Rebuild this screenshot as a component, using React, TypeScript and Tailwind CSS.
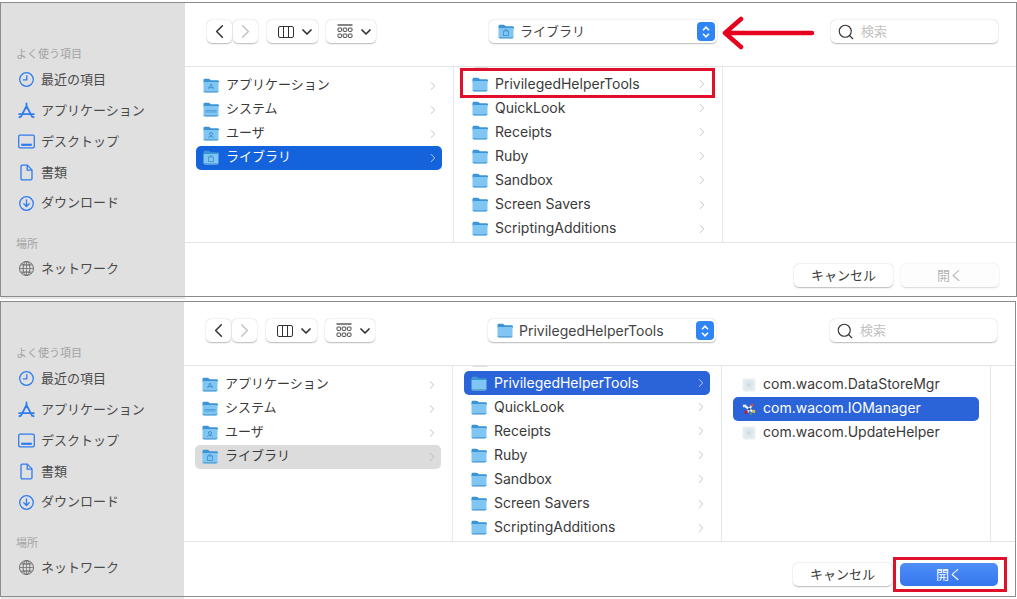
import type { ReactNode } from "react";
import { ChevronLeft, ChevronRight, ChevronDown, Search } from "lucide-react";

type Glyph = "apps" | "system" | "user" | "library" | "none";

function Folder({ glyph = "none", className = "w-4 h-[15px]" }: { glyph?: Glyph; className?: string }) {
  return (
    <svg viewBox="0 0 16 15" className={`${className} shrink-0`}>
      <path d="M0.5 2.2C0.5 1.3 1.1 .8 2 .8h3.6c.6 0 1 .2 1.4.6l.9.9h6.6c.9 0 1.5.6 1.5 1.5v1H.5z" fill="#3d94d4" />
      <path d="M.5 4h15v8.8c0 1-.6 1.6-1.5 1.6H2c-.9 0-1.5-.6-1.5-1.6z" fill="#7fc6f4" />
      <path d="M.5 13h15v.1c0 .8-.6 1.4-1.5 1.4H2c-.9 0-1.5-.6-1.5-1.4z" fill="#5ea6d6" />
      {glyph === "apps" && <path d="M8 6l-2.4 5M8 6l2.4 5M5.5 9.6h5" stroke="#3f8fca" strokeWidth=".9" fill="none" />}
      {glyph === "system" && <path d="M2.5 8.6h11M2.5 10h11" stroke="#3f8fca" strokeWidth=".7" fill="none" />}
      {glyph === "user" && (
        <g fill="none" stroke="#3f8fca" strokeWidth=".9">
          <circle cx="8" cy="8" r="1.5" />
          <path d="M5.2 11.6c.6-1.4 5-1.4 5.6 0" />
        </g>
      )}
      {glyph === "library" && (
        <g fill="none" stroke="#3f8fca" strokeWidth=".8">
          <rect x="5.6" y="7" width="4.8" height="4.6" />
          <path d="M6.8 7V5.8h2.4V7" />
        </g>
      )}
    </svg>
  );
}

function DocIcon() {
  return (
    <svg viewBox="0 0 14 14" className="w-[14px] h-[14px] shrink-0">
      <rect x=".5" y=".5" width="13" height="13" rx="2" fill="#e8eff2" />
      <rect x="2.5" y="2.5" width="9" height="9" fill="#dde7ec" />
      <circle cx="7" cy="7" r="1.8" fill="#cfdce3" />
    </svg>
  );
}

function WacomIcon() {
  return (
    <svg viewBox="0 0 16 16" className="w-[14px] h-[14px] shrink-0">
      <path d="M4 5l8 6M11 4l-5 8" stroke="#f4f4f4" strokeWidth="2.4" />
      <rect x="1" y="3" width="4" height="3" fill="#dfe6ea" />
      <rect x="10" y="2" width="3" height="3" fill="#d8463f" />
      <rect x="3" y="10" width="3.5" height="3.5" fill="#b2233f" />
      <rect x="12" y="9" width="3" height="3.5" fill="#d5c23a" />
      <rect x="7" y="7" width="2.5" height="2.5" fill="#2b3f73" />
      <rect x="9" y="12" width="2.5" height="2.5" fill="#5a9a5a" />
    </svg>
  );
}

const sideIconClass = "w-[17px] h-[17px] text-[#2f7bf0] shrink-0";

function ClockIcon() {
  return (
    <svg viewBox="0 0 17 17" className={sideIconClass} fill="none" stroke="currentColor" strokeWidth="1.3">
      <circle cx="8.5" cy="8.5" r="6.8" />
      <path d="M8.8 4.6v4.3H5.4" strokeLinecap="round" />
    </svg>
  );
}

function AppIcon() {
  return (
    <svg viewBox="0 0 17 17" className={sideIconClass} fill="none" stroke="currentColor" strokeWidth="1.8" strokeLinecap="round">
      <path d="M8.5 1.5v2.6M8.5 4L3 14.6M8.5 4l5.5 10.6M1.2 12.2h14.6M1.4 15.2l1.6-.6M15.6 15.2l-1.6-.6" />
    </svg>
  );
}

function DesktopIcon() {
  return (
    <svg viewBox="0 0 17 17" className={sideIconClass} fill="none" stroke="currentColor" strokeWidth="1.3">
      <rect x=".7" y="2.2" width="15.6" height="12.6" rx="1.4" />
      <path d="M3.2 11.8h10.6" strokeWidth="2.2" />
    </svg>
  );
}

function DocumentIcon() {
  return (
    <svg viewBox="0 0 17 17" className={sideIconClass} fill="none" stroke="currentColor" strokeWidth="1.3">
      <path d="M3 2.4c0-.8.5-1.3 1.3-1.3h5l4.7 4.8v8.7c0 .8-.5 1.3-1.3 1.3H4.3c-.8 0-1.3-.5-1.3-1.3z" />
      <path d="M9.2 1.2v4.9H14" />
    </svg>
  );
}

function DownloadIcon() {
  return (
    <svg viewBox="0 0 17 17" className={sideIconClass} fill="none" stroke="currentColor" strokeWidth="1.3" strokeLinecap="round">
      <circle cx="8.5" cy="8.5" r="6.8" />
      <path d="M8.5 4.8v6.6M5.8 8.8l2.7 2.7 2.7-2.7" />
    </svg>
  );
}

function GlobeIcon() {
  return (
    <svg viewBox="0 0 17 17" className="w-[17px] h-[17px] text-[#6e6e6e] shrink-0" fill="none" stroke="currentColor" strokeWidth="1">
      <circle cx="8.5" cy="8.5" r="7" />
      <ellipse cx="8.5" cy="8.5" rx="3.4" ry="7" />
      <path d="M1.5 8.5h14M2.5 5h12M2.5 12h12M8.5 1.5v14M3.5 3.5c2 2 8 2 10 0M3.5 13.5c2-2 8-2 10 0" strokeWidth=".8" />
    </svg>
  );
}

function ColumnsIcon() {
  return (
    <svg viewBox="0 0 16 12" className="w-4 h-3 shrink-0" fill="none" stroke="#333" strokeWidth="1">
      <rect x=".5" y=".5" width="15" height="11" rx="1.5" />
      <path d="M5.5 .5v11M10.5 .5v11" />
    </svg>
  );
}

function GalleryIcon() {
  return (
    <svg viewBox="0 0 16 15" className="w-4 h-[15px] shrink-0" fill="none" stroke="#333" strokeWidth=".9">
      <path d="M.5 1h15" strokeWidth="1.2" />
      <rect x="1" y="4" width="3.6" height="3.4" rx=".8" />
      <rect x="6.2" y="4" width="3.6" height="3.4" rx=".8" />
      <rect x="11.4" y="4" width="3.6" height="3.4" rx=".8" />
      <rect x="1" y="10" width="3.6" height="3.4" rx=".8" />
      <rect x="6.2" y="10" width="3.6" height="3.4" rx=".8" />
      <rect x="11.4" y="10" width="3.6" height="3.4" rx=".8" />
    </svg>
  );
}

const btnClass = "h-[23px] bg-white rounded-[5px] shadow-[0_0.5px_1.5px_rgba(0,0,0,0.28)] flex items-center justify-center";

function SideHeading({ children, className }: { children: ReactNode; className: string }) {
  return <div className={`h-4 leading-4 pl-[15px] text-[11px] text-[#a3a3a3] ${className}`}>{children}</div>;
}

function SideItem({ icon, label }: { icon: ReactNode; label: string }) {
  return (
    <div className="h-[30.8px] flex items-center gap-[6px] pl-[17px] text-[13px] text-[#4a4a4a]">
      {icon}
      <span>{label}</span>
    </div>
  );
}

function Sidebar({ width }: { width: string }) {
  return (
    <div className={`${width} shrink-0 bg-[#e0e0e0] pt-[43px] relative`}>
      <SideHeading className="mb-[2.5px]">よく使う項目</SideHeading>
      <SideItem icon={<ClockIcon />} label="最近の項目" />
      <SideItem icon={<AppIcon />} label="アプリケーション" />
      <SideItem icon={<DesktopIcon />} label="デスクトップ" />
      <SideItem icon={<DocumentIcon />} label="書類" />
      <SideItem icon={<DownloadIcon />} label="ダウンロード" />
      <SideHeading className="mt-[18px] mb-[1px]">場所</SideHeading>
      <SideItem icon={<GlobeIcon />} label="ネットワーク" />
      <div className="absolute left-0 right-0 -bottom-[3px] h-[2px] bg-[#e6e6e6]" />
    </div>
  );
}

function Toolbar({ title, titleFolder, titleSize }: { title: string; titleFolder: Glyph; titleSize: string }) {
  return (
    <div className="h-[64px] border-b border-[#e4e4e4] pt-[17px] pl-[22px] flex items-start">
      <div className={`${btnClass} w-[25px]`}>
        <ChevronLeft className="w-[23px] h-[23px] text-[#333] shrink-0" strokeWidth={1.6} />
      </div>
      <div className={`${btnClass} w-[25px] ml-px`}>
        <ChevronRight className="w-[23px] h-[23px] text-[#c4c4c4] shrink-0" strokeWidth={1.6} />
      </div>
      <div className={`${btnClass} w-[51px] ml-[9px] pl-[11px] gap-[5px] !justify-start`}>
        <ColumnsIcon />
        <ChevronDown className="w-4 h-4 text-[#333] shrink-0" strokeWidth={2.6} />
      </div>
      <div className={`${btnClass} w-[50px] ml-[8px] pl-[11px] gap-[5px] !justify-start`}>
        <GalleryIcon />
        <ChevronDown className="w-4 h-4 text-[#333] shrink-0" strokeWidth={2.6} />
      </div>
      <div className={`${btnClass} w-[228px] ml-[113px] pl-[9px] pr-[2px] !justify-start`}>
        <Folder glyph={titleFolder} />
        <span className={`ml-[6px] text-[#444] ${titleSize}`}>{title}</span>
        <div className="ml-auto w-[18px] h-[19px] rounded-[4px] bg-[#2f84f6] flex flex-col items-center justify-center text-white">
          <svg viewBox="0 0 10 14" className="w-[10px] h-[14px]" fill="none" stroke="currentColor" strokeWidth="1.6">
            <path d="M2 5.2L5 2.2l3 3M2 8.8l3 3 3-3" />
          </svg>
        </div>
      </div>
      <div className={`${btnClass} w-[167px] ml-[114px] pl-[6px] !justify-start`}>
        <Search className="w-[18px] h-[18px] text-[#333] shrink-0" strokeWidth={1.5} />
        <span className="ml-[6px] text-[13px] text-[#c2c2c2]">検索</span>
      </div>
    </div>
  );
}

function Chevron({ white }: { white?: boolean }) {
  return (
    <ChevronRight
      className={`w-[14px] h-[14px] ml-auto shrink-0 ${white ? "text-[#dce6fa]" : "text-[#b4b4b4]"}`}
      strokeWidth={1.4}
    />
  );
}

type Row = { label: string; glyph?: Glyph; sel?: string; dark?: boolean; icon?: ReactNode; size?: string };

function Column({ rows, pad, chevron = true, peek, inset = "pl-[7px]" }: { rows: Row[]; pad: string; chevron?: boolean; peek?: boolean; inset?: string }) {
  return (
    <div className={`w-[269px] shrink-0 border-r border-[#e8e8e8] overflow-hidden px-[11px] relative ${pad}`}>
      {peek && <div className="absolute left-[19px] -top-[14px] w-4 h-[15px] rounded-[2px] bg-[#dddddd]" />}
      {rows.map((r) => (
        <div key={r.label} className={`h-[24.1px] rounded-[5px] flex items-center gap-[7px] pr-[2px] ${inset} ${r.size ?? "text-[14px]"} ${r.sel ?? ""} ${r.sel && r.dark ? "text-white" : "text-[#3a3a3a]"}`}>
          {r.icon ?? <Folder glyph={r.glyph} />}
          <span className="whitespace-nowrap mb-[2px]">{r.label}</span>
          {chevron && <Chevron white={!!r.sel && r.dark} />}
        </div>
      ))}
    </div>
  );
}

function Footer({ active }: { active?: boolean }) {
  return (
    <div className="flex-1 border-t border-[#e4e4e4] pt-[21px] pr-[17px] flex justify-end items-start gap-[8px]">
      <div className={`${btnClass} w-[99px] text-[13px] text-[#3a3a3a]`}>キャンセル</div>
      {active ? (
        <div className="h-[23px] w-[98px] rounded-[5px] bg-gradient-to-b from-[#4f8ff7] to-[#3575ee] flex items-center justify-center text-[13px] text-white">開く</div>
      ) : (
        <div className="h-[23px] w-[98px] rounded-[5px] bg-[#fdfdfd] shadow-[0_0.5px_1.5px_rgba(0,0,0,0.16)] flex items-center justify-center text-[13px] text-[#b4b4b4]">開く</div>
      )}
    </div>
  );
}

const tail: Row[] = [
  { label: "QuickLook" },
  { label: "Receipts" },
  { label: "Ruby" },
  { label: "Sandbox" },
  { label: "Screen Savers" },
  { label: "ScriptingAdditions" },
];

function rootRows(sel: string, dark: boolean): Row[] {
  return [
    { label: "アプリケーション", glyph: "apps", size: "text-[13px]" },
    { label: "システム", glyph: "system", size: "text-[13px]" },
    { label: "ユーザ", glyph: "user", size: "text-[13px]" },
    { label: "ライブラリ", glyph: "library", size: "text-[13px]", sel, dark },
  ];
}

function Shell({ className, sidebar, children }: { className: string; sidebar: string; children: ReactNode }) {
  return (
    <div className={`border border-[#8c8c8c] flex bg-white ${className}`}>
      <Sidebar width={sidebar} />
      <div className="flex-1 min-w-0 flex flex-col">{children}</div>
    </div>
  );
}

export default function App() {
  return (
    <div className="relative w-[1017px] h-[599px] bg-white pt-[2px] overflow-hidden font-['Inter','Noto_Sans_CJK_JP',sans-serif]">
      <Shell className="w-[1017px] h-[295px]" sidebar="w-[184px]">
        <Toolbar title="ライブラリ" titleFolder="library" titleSize="text-[13px]" />
        <div className="h-[175px] flex">
          <Column pad="pt-[6.6px]" rows={rootRows("bg-[#1463dd]", true)} />
          <Column pad="pt-[5px]" rows={[{ label: "PrivilegedHelperTools" }, ...tail]} peek />
        </div>
        <Footer />
      </Shell>
      <Shell className="w-[1016px] h-[296px] mt-[4px]" sidebar="w-[183px]">
        <Toolbar title="PrivilegedHelperTools" titleFolder="none" titleSize="text-[14px]" />
        <div className="h-[175px] flex">
          <Column pad="pt-[6.6px]" rows={rootRows("bg-[#dcdcdc]", false)} />
          <Column pad="pt-[5px]" rows={[{ label: "PrivilegedHelperTools", sel: "bg-[#2b63d9]", dark: true }, ...tail]} peek />
          <Column
            pad="pt-[6.5px]"
            chevron={false}
            inset="pl-[9px]"
            rows={[
              { label: "com.wacom.DataStoreMgr", icon: <DocIcon /> },
              { label: "com.wacom.IOManager", icon: <WacomIcon />, sel: "bg-[#2b63d9]", dark: true },
              { label: "com.wacom.UpdateHelper", icon: <DocIcon /> },
            ]}
          />
        </div>
        <Footer active />
      </Shell>

      {/* red annotations on top of the screenshots */}
      <div className="absolute left-[460px] top-[68px] w-[255px] h-[30px] border-[3px] border-[#e0102a]" />
      <div className="absolute left-[893px] top-[557px] w-[114px] h-[35px] border-[3px] border-[#e0102a]" />
      <svg className="absolute left-[720px] top-[14px] w-[96px] h-[38px]" viewBox="0 0 96 38" fill="none" stroke="#e8001f" strokeWidth="4.5" strokeLinecap="round" strokeLinejoin="round">
        <path d="M92 19H6M21 5L5 19l16 14" />
      </svg>
    </div>
  );
}
